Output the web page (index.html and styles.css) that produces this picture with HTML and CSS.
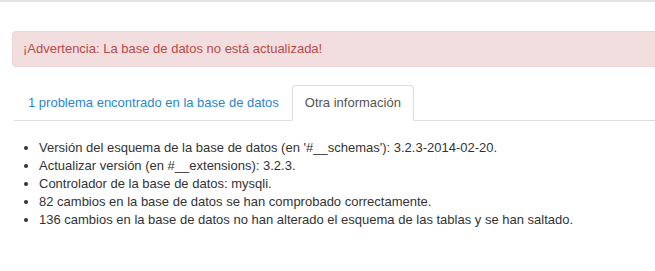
FILE: index.html
```html
<!DOCTYPE html>
<html lang="es">
<head>
<meta charset="utf-8">
<link rel="stylesheet" href="styles.css">
</head>
<body>
<div class="topbar"></div>
<div class="page">
  <div class="alert">¡Advertencia: La base de datos no está actualizada!</div>
  <ul class="tabs">
    <li class="tab"><a href="#">1 problema encontrado en la base de datos</a></li>
    <li class="tab active"><a href="#">Otra información</a></li>
  </ul>
  <ul class="info">
    <li>Versión del esquema de la base de datos (en '#__schemas'): 3.2.3-2014-02-20.</li>
    <li>Actualizar versión (en #__extensions): 3.2.3.</li>
    <li>Controlador de la base de datos: mysqli.</li>
    <li>82 cambios en la base de datos se han comprobado correctamente.</li>
    <li>136 cambios en la base de datos no han alterado el esquema de las tablas y se han saltado.</li>
  </ul>
</div>
</body>
</html>
```
FILE: styles.css
```css
html, body {
  margin: 0;
  padding: 0;
  background: #fff;
  overflow: hidden;
}
body {
  font-family: "Liberation Sans", Arial, sans-serif;
  font-size: 13px;
  line-height: 18px;
  color: #333;
}
.topbar {
  height: 2px;
  background: #e2e2e2;
}
.page {
  width: 700px;
  padding: 29px 0 0 12px;
}
.alert {
  background: #f2dede;
  border: 1px solid #eed3d7;
  border-radius: 4px;
  color: #b94a48;
  padding: 8px 10px;
  margin-bottom: 18px;
}
.tabs {
  list-style: none;
  margin: 0 0 18px 2px;
  padding: 0;
  display: flex;
  border-bottom: 1px solid #ddd;
}
.tab {
  margin-bottom: -1px;
}
.tab a {
  display: block;
  padding: 8px 12px;
  margin-right: 2px;
  border: 1px solid transparent;
  border-radius: 4px 4px 0 0;
  color: #2a87cf;
  text-decoration: none;
}
.tab:first-child a {
  padding-left: 13px;
  padding-right: 10px;
}
.tab.active a {
  color: #555;
  background: #fff;
  border-color: #ddd #ddd transparent;
}
.info {
  margin: 0;
  padding: 0 0 0 27px;
}
```
